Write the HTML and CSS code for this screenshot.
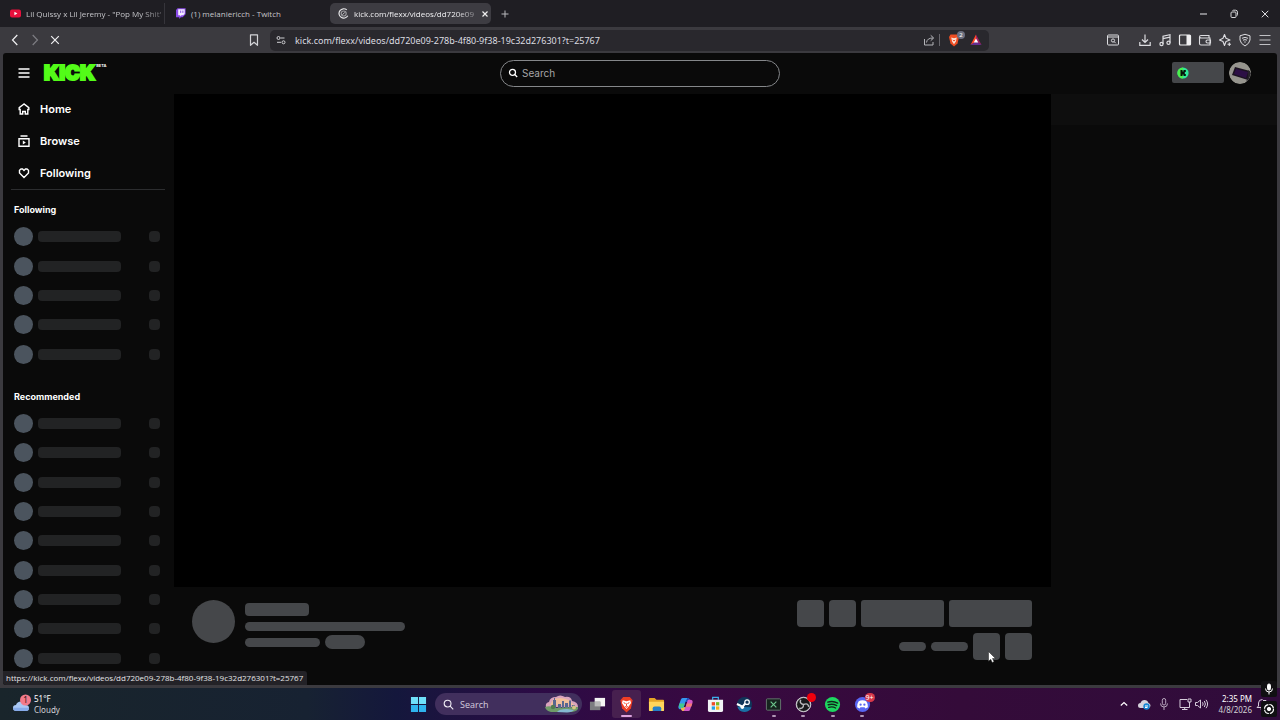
FILE: index.html
```html
<!DOCTYPE html>
<html lang="en">
<head>
    <meta charset="UTF-8">
    <meta name="viewport" content="width=device-width, initial-scale=1.0">
    <title>kick.com/flexx/videos</title>
    <link rel="stylesheet" href="styles.css">
</head>
<body>
    <!-- Tab strip -->
    <div class="tab-strip">
        <div class="tab tab-divided">
            <svg class="tab-icon" viewBox="0 0 11 11"><rect y="1.5" width="11" height="8" rx="2" fill="#e8103c"/><path d="M4.4 3.7v3.6l3-1.8z" fill="#fff"/></svg>
            <a href="#" class="tab-title">Lil Quissy x Lil Jeremy - "Pop My Shit'</a>
        </div>
        <div class="tab">
            <svg class="tab-icon" viewBox="0 0 11 11"><path d="M2.6.3h8v6L7.600 9.300H5.800L4.200 10.900V9.300H1V2z" fill="#8a4be8"/><path d="M3.200 1.200h6.500v4.600L8.200 7.200H6.500L5.200 8.500V7.200h-2z" fill="#f4eeff"/><path d="M5.700 2.600v2.300M7.900 2.600v2.300" stroke="#8a4be8"/></svg>
            <a href="#" class="tab-title">(1) melaniericch - Twitch</a>
        </div>
        <div class="tab tab-active">
            <svg class="tab-icon" viewBox="0 0 11 11" fill="none"><path d="M8.800 1.900A4.700 4.700 0 1 0 9.800 7.800" stroke="#e6e6e8" stroke-width="1.200"/><circle cx="5.700" cy="5.500" r="2.500" stroke="#9a9a9e" stroke-width="1.200"/><path d="M4.500 6.700l2.400-2.400" stroke="#c8c8cc"/></svg>
            <a href="#" class="tab-title">kick.com/flexx/videos/dd720e09</a>
            <button class="icon-btn tab-close" aria-label="Close tab"><svg viewBox="0 0 8 8"><path d="M1.500 1.500l5 5M6.500 1.500l-5 5" stroke="#eee" stroke-width="1.200"/></svg></button>
        </div>
        <button class="icon-btn new-tab" aria-label="New tab"><svg viewBox="0 0 10 10"><path d="M5 1.500v7M1.500 5h7" stroke="#b9b9bd"/></svg></button>
        <div class="window-controls">
            <button class="icon-btn" aria-label="Minimize"><svg viewBox="0 0 14 14"><path d="M4 7h7" stroke="#c9c9cc" stroke-width="1.200"/></svg></button>
            <button class="icon-btn" aria-label="Restore"><svg viewBox="0 0 14 14" fill="none" stroke="#d6d6d9"><rect x="4" y="5" width="5" height="5.500" rx="1"/><path d="M5.500 4q.2-.8 1-.8h2q2 0 2 2v2.500q0 .8-.8 1"/></svg></button>
            <button class="icon-btn" aria-label="Close window"><svg viewBox="0 0 14 14"><path d="M3.800 3.800l6.500 6.500M10.300 3.800l-6.500 6.500" stroke="#e2e2e5"/></svg></button>
        </div>
    </div>

    <!-- Toolbar -->
    <div class="toolbar">
        <div class="toolbar-nav">
            <button class="icon-btn" aria-label="Back"><svg viewBox="0 0 14 14" fill="none"><path d="M9.300 2L4.500 7l4.800 5" stroke="#f0f0f2" stroke-width="1.200"/></svg></button>
            <button class="icon-btn" aria-label="Forward"><svg viewBox="0 0 14 14" fill="none"><path d="M4.700 2l4.800 5-4.800 5" stroke="#7d7d82" stroke-width="1.200"/></svg></button>
            <button class="icon-btn" aria-label="Stop loading"><svg viewBox="0 0 14 14"><path d="M3.200 3.200l7.600 7.600M10.800 3.200l-7.600 7.600" stroke="#f0f0f2" stroke-width="1.200"/></svg></button>
        </div>
        <div class="toolbar-address">
            <button class="icon-btn" aria-label="Bookmark"><svg viewBox="0 0 14 14" fill="none"><path d="M3.500 1.800h7v10.500L7 9.300l-3.500 3z" stroke="#d4d4d8" stroke-width="1.200" stroke-linejoin="round"/></svg></button>
            <div class="address-bar">
                <svg class="address-site" viewBox="0 0 10 10" fill="none" stroke="#d0d0d4"><circle cx="2.500" cy="3" r="1.500"/><path d="M4.500 3h4M1 7.300h4"/><circle cx="7.500" cy="7.300" r="1.500"/></svg>
                <input class="address-input" type="text" aria-label="Address" value="kick.com/flexx/videos/dd720e09-278b-4f80-9f38-19c32d276301?t=25767">
                <button class="icon-btn address-share" aria-label="Share"><svg viewBox="0 0 14 14" fill="none" stroke="#b4b4b9"><path d="M2.500 6v6h8.500V9M4.500 9.500Q5 5 11 5M8.700 2.300L11.700 5 8.700 7.700"/></svg></button>
                <button class="icon-btn address-shield" aria-label="Brave Shields"><svg viewBox="0 0 14 14"><path d="M3.500 1.500h7l1.500 2.500-1.500 6.500L7 13.500 3.500 10.500 2 4z" fill="#ee4d22"/><path d="M4.200 4.500l2.800.8 2.800-.8-.9 4L7 11.200 5.100 8.500z" fill="#fbe3d9"/><path d="M5.800 7l1.200 1 1.200-1" stroke="#ee4d22" fill="none"/></svg><span class="shield-count">2</span></button>
                <button class="icon-btn" aria-label="Rewards"><svg viewBox="0 0 14 14"><path d="M7 1.500L1.500 12 7 8.500z" fill="#ff4724"/><path d="M7 1.500L12.500 12 7 8.500z" fill="#9e1f63"/><path d="M1.500 12h11L7 8.200z" fill="#662d91"/><path d="M7 5.500L4.700 9.600h4.600z" fill="#fff"/></svg></button>
            </div>
        </div>
        <div class="toolbar-actions">
            <button class="icon-btn search-tabs" aria-label="Search tabs"><svg viewBox="0 0 14 14" fill="none" stroke="#dcdce0"><rect x="1.500" y="2" width="11" height="10" rx="1"/><path d="M2 4h10"/><circle cx="7" cy="7.500" r="1.600"/><path d="M8.200 8.700l1.500 1.500"/></svg></button>
            <button class="icon-btn" aria-label="Downloads"><svg viewBox="0 0 14 14" fill="none" stroke="#dcdce0" stroke-width="1.200"><path d="M7 1.500v8M4 6.500l3 3 3-3M1.800 9v3.300h10.400V9"/></svg></button>
            <button class="icon-btn" aria-label="Media"><svg viewBox="0 0 14 14" fill="none" stroke="#dcdce0" stroke-width="1.200"><path d="M5 11V3.200l7-1.500v8M5 5.600l7-1.500"/><circle cx="3.500" cy="11" r="1.600"/><circle cx="10.500" cy="9.700" r="1.600"/></svg></button>
            <button class="icon-btn" aria-label="Sidebar"><svg viewBox="0 0 14 14"><rect x="1.500" y="2" width="11" height="10" rx="1" fill="none" stroke="#f0f0f2" stroke-width="1.200"/><path d="M8.500 2h4v10h-4z" fill="#f0f0f2"/></svg></button>
            <button class="icon-btn" aria-label="Wallet"><svg viewBox="0 0 14 14" fill="none" stroke="#dcdce0" stroke-width="1.100"><path d="M11 5V2.500H3Q1.500 2.500 1.500 4v6.500q0 1.500 1.500 1.500h9V5H3.500Q1.500 5 1.500 3.800M12.500 7H9.500q-1.500 0-1.500 1.500T9.500 10h3z"/></svg></button>
            <button class="icon-btn" aria-label="Leo AI"><svg viewBox="0 0 14 14" fill="none" stroke="#dcdce0" stroke-width="1.100"><path d="M6.500 1.500L8 5.300 12 7 8 8.500 6.500 12.500 5 8.500 1.500 7 5 5.300z" stroke-linejoin="round"/><path d="M11.300 9.500v3.500M9.500 11.300h3.500"/></svg></button>
            <button class="icon-btn" aria-label="VPN"><svg viewBox="0 0 14 14" fill="none" stroke="#dcdce0"><path d="M7 1.300l5 1.500V7q-.5 3.500-5 6-4.500-2.500-5-6V2.800z"/><path d="M4 5.300q3-1.800 6 0M5 7.200q2-1.200 4 0M6.300 9h1.400"/></svg></button>
            <button class="icon-btn" aria-label="Menu"><svg viewBox="0 0 14 14"><path d="M1.500 2.500h11M1.500 7h11M1.500 11.500h11" stroke="#c0c0c4" stroke-width="1.200"/></svg></button>
        </div>
    </div>

    <!-- Page -->
    <div class="page">
        <header class="site-header">
            <div class="header-left">
                <button class="icon-btn" aria-label="Toggle sidebar"><svg viewBox="0 0 14 14"><path d="M1.500 3h11M1.500 7h11M1.500 11h11" stroke="#fff" stroke-width="1.500"/></svg></button>
                <a href="#" class="logo">KICK<sup class="logo-beta">BETA</sup></a>
            </div>
            <label class="search">
                <svg class="search-icon" viewBox="0 0 10 10" fill="none" stroke="#fff" stroke-width="1.300"><circle cx="4.500" cy="4.300" r="3"/><path d="M6.700 6.500l2.500 2.500"/></svg>
                <input class="search-input" type="search" placeholder="Search" aria-label="Search">
            </label>
            <div class="header-right">
                <button class="balance" aria-label="Kicks balance"><svg viewBox="0 0 12 12"><circle cx="6" cy="6" r="5.600" fill="#2fe89a"/><path d="M6 .4a5.600 5.600 0 0 0 0 11.200z" fill="#4cf04a"/><path d="M3.500 3h2v1.500h1V3h2.300v2h-1v2h1v2H6.500V7.500h-1V9h-2z" fill="#06120a"/></svg></button>
                <button class="avatar" aria-label="Account"><svg viewBox="0 0 22 22"><circle cx="11" cy="11" r="11" fill="#96958e"/><path d="M6 5l15 4-2 9L3 13z" fill="#1b1320"/><path d="M7 7l12 3-2 6L5 12z" fill="#2c0f45"/><path d="M19 8l3 3-2 6-3 3 2-5z" fill="#26222a"/></svg></button>
            </div>
        </header>

        <div class="page-body">
            <aside class="sidebar">
                <nav class="side-nav">
                    <a href="#"><svg viewBox="0 0 14 14" fill="none" stroke="#fff" stroke-width="1.400"><path d="M7 2L2.200 5.700v1.800h1V12h2.500V9.500h2.600V12h2.500V7.500h1V5.700z"/></svg>Home</a>
                    <a href="#"><svg viewBox="0 0 14 14" fill="none" stroke="#fff" stroke-width="1.400"><path d="M3.500 2h7M2 4.800h10v7.400H2z"/><path d="M5.800 6.500v4l3-2z" fill="#fff" stroke="none"/></svg>Browse</a>
                    <a href="#"><svg viewBox="0 0 14 14" fill="none" stroke="#fff" stroke-width="1.400"><path d="M7 11.500L2.500 7V4.300L4 3h1.600L7 4.400 8.400 3H10l1.500 1.300V7z"/></svg>Following</a>
                </nav>
                <section class="channels">
                    <h2>Following</h2>
                    <ul class="channel-list channel-list-short">
                        <li><i></i><b></b><s></s></li>
                        <li><i></i><b></b><s></s></li>
                        <li><i></i><b></b><s></s></li>
                        <li><i></i><b></b><s></s></li>
                        <li><i></i><b></b><s></s></li>
                    </ul>
                </section>
                <section class="channels channels-recommended">
                    <h2>Recommended</h2>
                    <ul class="channel-list channel-list-long">
                        <li><i></i><b></b><s></s></li>
                        <li><i></i><b></b><s></s></li>
                        <li><i></i><b></b><s></s></li>
                        <li><i></i><b></b><s></s></li>
                        <li><i></i><b></b><s></s></li>
                        <li><i></i><b></b><s></s></li>
                        <li><i></i><b></b><s></s></li>
                        <li><i></i><b></b><s></s></li>
                        <li><i></i><b></b><s></s></li>
                    </ul>
                </section>
            </aside>

            <main class="stage">
                <div class="video"></div>
                <div class="video-info">
                    <div class="bone bone-avatar"></div>
                    <div class="info-lines">
                        <div class="bone bone-name"></div>
                        <div class="bone bone-title"></div>
                        <div class="info-tags">
                            <div class="bone bone-category"></div>
                            <div class="bone bone-tag"></div>
                        </div>
                    </div>
                    <div class="info-actions">
                        <div class="action-row">
                            <div class="bone bone-square"></div>
                            <div class="bone bone-square"></div>
                            <div class="bone bone-button"></div>
                            <div class="bone bone-button"></div>
                        </div>
                        <div class="action-row">
                            <div class="action-stats">
                                <div class="bone bone-viewers"></div>
                                <div class="bone bone-time"></div>
                            </div>
                            <div class="bone bone-square bone-hovered">
                                <svg class="pointer" viewBox="0 0 8 12"><path d="M.5.5v9.800l2.200-2 1.500 3.200 1.800-.8-1.500-3.200h3z" fill="#fff" stroke="#222" stroke-width=".5"/></svg>
                            </div>
                            <div class="bone bone-square"></div>
                        </div>
                    </div>
                </div>
            </main>

            <aside class="chat">
                <div class="chat-header"></div>
            </aside>
        </div>
        <div class="link-status">https://kick.com/flexx/videos/dd720e09-278b-4f80-9f38-19c32d276301?t=25767</div>
    </div>

    <!-- Taskbar -->
    <footer class="taskbar">
        <button class="weather">
            <svg viewBox="0 0 20 20"><path d="M4.500 17Q1 17 1 13.800 1 11 4 11 5 7.500 9 7.500q3.500 0 4.500 3.500 3.500 0 3.500 3T14 17z" fill="#a9c8f5"/><path d="M4.500 17Q1 17 1 13.800h16Q17 17 14 17z" fill="#86abea"/><circle cx="13.500" cy="6" r="5.500" fill="#f27a8a"/><text x="13.500" y="9" text-anchor="middle" font-family="Noto Sans, sans-serif" font-size="8" fill="#2a1015">1</text></svg>
            <span class="weather-text">51°F<span>Cloudy</span></span>
        </button>
        <div class="task-center">
            <button class="task-app" aria-label="Start"><svg viewBox="0 0 18 18"><path d="M1 1h7.500v7.500H1zM9.500 1H17v7.500H9.500z" fill="#6fe0fa"/><path d="M1 9.500h7.500V17H1zM9.500 9.500H17V17H9.500z" fill="#2fb4ee"/></svg></button>
            <label class="task-search">
                <svg class="task-search-icon" viewBox="0 0 12 12" fill="none" stroke="#f0ecf4" stroke-width="1.200"><circle cx="5" cy="5" r="3.700"/><path d="M7.800 7.800l3.400 3.400"/></svg>
                <input type="search" placeholder="Search" aria-label="Search Windows">
                <svg class="task-search-art" viewBox="0 0 34 18"><path d="M1 12Q0 8 4 7q1-5 7-5 4-3 9 0 6-1 7 4 6 1 6 6z" fill="#d9a4bd"/><path d="M8 5q6-4 16 0l5 5H5z" fill="#f1bf9b"/><path d="M8 14V5h1V3h1v2h1v9zM13 14V9h3v5zM17 14V6h2v8zM20 14V8h3v6zM24 14V6l1-1 1 1v8zM27 14v-4h3v4z" fill="#596790"/><path d="M0 12q5-2 10 1l23-1q1 4-6 5H6q-5-1-6-5z" fill="#6f9c68"/><path d="M12 17q2-3 10-3l7 1q-2 2-7 2.500z" fill="#85b9d2"/><circle cx="8" cy="12" r="2.200" fill="#527c50"/><circle cx="29" cy="12.500" r="2" fill="#d6c383"/></svg>
            </label>
            <div class="task-apps">
                <button class="task-app" aria-label="Task view"><svg viewBox="0 0 18 18"><path d="M6 2h11v9H6z" fill="#f4f4f4"/><path d="M1 6h11v9H1z" fill="#7c7d80"/><path d="M6 6h6v5H6z" fill="#b9bab9"/></svg></button>
                <button class="task-app task-app-current" aria-label="Brave"><svg viewBox="0 0 18 18"><path d="M5.500 1h7l3 3.500-1.800 8.500L9 17.500 4.300 13 2.500 4.500z" fill="#ef3f25"/><path d="M5 4.500l4 1 4-1 .8 3-2.500 3.500L9 13.800 6.700 11 4.200 7.500z" fill="#fff"/><path d="M6 7l2 1M12 7l-2 1M9 8v3M7.500 11L9 12l1.500-1" stroke="#ef3f25" fill="none"/></svg></button>
                <button class="task-app" aria-label="File Explorer"><svg viewBox="0 0 18 18"><path d="M1 3q0-1 1-1h5l2 2h7q1 0 1 1v3H1z" fill="#e5a526"/><path d="M1 6h16v9q0 1-1 1H2q-1 0-1-1z" fill="#ffd55b"/><path d="M5 16v-3q0-2 2-2h5q2 0 2 2v3z" fill="#2580c8"/></svg></button>
                <button class="task-app" aria-label="Copilot"><svg viewBox="0 0 18 18"><path d="M6 2h5q2 0 2.500 2L14 6H9L6.500 14H4q-3 0-2.500-3L4 4q.5-2 2-2z" fill="#3598ef"/><path d="M9 6l2-4q2 0 2.500 2L14 6z" fill="#1846b8"/><path d="M12 16H7q-2 0-2.500-2L4 12h5l2.500-8H14q3 0 2.500 3L14 14q-.5 2-2 2z" fill="#d258c8"/><path d="M4 12h5l-2 4q-2 0-2.500-2z" fill="#f5b847"/><path d="M10.500 8h5.800L15 11.500H9.200z" fill="#f57c75"/><path d="M2.500 8h5.700L6.500 13 2 12z" fill="#45c88a"/></svg></button>
                <button class="task-app" aria-label="Microsoft Store"><svg viewBox="0 0 18 18"><path d="M6 4V1.500h6V4" fill="none" stroke="#3ab0ed" stroke-width="1.300"/><path d="M1 4h16v11q0 2-2 2H3q-2 0-2-2z" fill="#f1f3f6"/><path d="M5 6.500h3.500V10H5z" fill="#ed4c2c"/><path d="M9.500 6.500H13V10H9.500z" fill="#78b927"/><path d="M5 11h3.500v3.500H5z" fill="#22a0e8"/><path d="M9.500 11H13v3.500H9.500z" fill="#f5b51d"/></svg></button>
                <button class="task-app" aria-label="Steam"><svg viewBox="0 0 18 18"><circle cx="9" cy="9" r="8" fill="#103558"/><path d="M1.500 11.500Q3 17 9 17q6-.5 7.500-5z" fill="#1c70a5"/><path d="M1 8.500l6 2.800L10.500 7" stroke="#fff" stroke-width="2.200" fill="none"/><circle cx="11.700" cy="6.500" r="2.400" fill="#103558" stroke="#fff" stroke-width="1.300"/><circle cx="6.700" cy="12" r="1.800" fill="#fff"/></svg></button>
                <button class="task-app task-app-open" aria-label="Xbox overlay"><svg viewBox="0 0 18 18"><rect x="1.500" y="3" width="15" height="12" rx="1" fill="#16251f" stroke="#65766e"/><path d="M6 6l6 6M12 6l-6 6" stroke="#6dc98d" stroke-width="1.200"/></svg></button>
                <button class="task-app task-app-open" aria-label="OBS Studio"><svg viewBox="0 0 18 18"><circle cx="9" cy="9" r="7.700" fill="#a9a9ad" stroke="#d0d0d3"/><circle cx="9" cy="9" r="6.800" fill="#19191b"/><path d="M9 9Q4.500 8 6 4M9 9q5-2 5.500 2.500M9 9q0 5-4.500 4" fill="none" stroke="#b8b8bb" stroke-width="1.500"/></svg><span class="app-badge badge-dot"></span></button>
                <button class="task-app task-app-open" aria-label="Spotify"><svg viewBox="0 0 18 18"><circle cx="9" cy="9" r="8" fill="#1ed760"/><path d="M4 6.500q5.500-1.800 10.500 1M4.500 9.300q4.500-1.500 9 .8M5 12q4-1.200 7.300.7" fill="none" stroke="#10271a" stroke-width="1.500" stroke-linecap="round"/></svg></button>
                <button class="task-app task-app-open" aria-label="Discord"><svg viewBox="0 0 18 18"><circle cx="9" cy="9" r="8" fill="#5865f2"/><path d="M5 5.500q4-1.800 8 0 2 3 1.700 6.300L12 13.200l-.8-1.200H6.800L6 13.200l-2.700-1.400Q3 8.500 5 5.500z" fill="#fff"/><circle cx="7" cy="9.200" r="1.200" fill="#5865f2"/><circle cx="11" cy="9.200" r="1.200" fill="#5865f2"/></svg><span class="app-badge">9+</span></button>
            </div>
        </div>
        <div class="tray">
            <button class="icon-btn" aria-label="Hidden icons"><svg viewBox="0 0 14 14" fill="none"><path d="M3.800 8.500L7 5.500l3.200 3" stroke="#fff" stroke-width="1.200"/></svg></button>
            <button class="icon-btn" aria-label="OneDrive"><svg viewBox="0 0 14 14"><path d="M3.500 11Q1 11 1 8.500T3.500 6Q4.500 3 7.500 3t4 3q2 .5 2 2.500T11.500 11z" fill="#d6d2dc"/><circle cx="9.500" cy="9.500" r="3.200" fill="#1685d2"/><path d="M8 9h3M8 10.500h2.500" stroke="#fff"/></svg></button>
            <button class="icon-btn" aria-label="Microphone"><svg viewBox="0 0 14 14" fill="none" stroke="#b7a6bd"><rect x="5.300" y="1.500" width="3.400" height="6.500" rx="1.700"/><path d="M3.500 6.500Q3.500 10 7 10t3.500-3.500M7 10v3"/></svg></button>
            <button class="icon-btn tray-network" aria-label="Network and volume"><svg viewBox="0 0 14 14" fill="none" stroke="#d6cddb"><path d="M9 2.500H2v8h9.500V7.500M4 12.500h5.500M6.700 10.500v2"/><path d="M10 2h3v3h-3zM11.500 5v3"/></svg><svg viewBox="0 0 14 14" fill="none" stroke="#d6cddb"><path d="M1.500 5.500h2L6.500 3v8l-3-2.500h-2zM8.500 5.300q1.300 1.700 0 3.400M10.300 4q2.300 3 0 6M12 2.800q3.200 4.200 0 8.400"/></svg></button>
            <button class="clock">2:35 PM<span>4/8/2026</span></button>
            <button class="icon-btn" aria-label="Notifications"><svg viewBox="0 0 14 14" fill="none" stroke="#d6cddb"><path d="M7.500 2.500Q3.500 2.500 3.500 6v3L2 10.500h9M5.500 12h3M8 3.500h3L8.500 6.500h3"/></svg></button>
        </div>
    </footer>

    <div class="capture-overlay">
        <span><svg viewBox="0 0 16 16" fill="none" stroke="#fff"><rect x="6.500" y="3" width="3" height="6" rx="1.500" fill="#fff"/><path d="M4.500 7.500Q4.500 11 8 11t3.500-3.500M8 11v2.500"/></svg></span>
        <span><svg viewBox="0 0 16 16" fill="none" stroke="#fff"><circle cx="8" cy="8" r="4.500" stroke-width="1.200" stroke-dasharray="6 1"/><circle cx="8" cy="8" r="1.700" fill="#fff"/></svg></span>
    </div>
</body>
</html>
```
FILE: styles.css
```css
:root {
    --chrome-dark: #1f1e23;
    --chrome: #3b3a3f;
    --page: #0a0a0a;
    --bone: #45474a;
    --kick: #53fc18;
    --ui-font: "Noto Sans", "Open Sans", sans-serif;
    --small-font: "Open Sans", "Noto Sans", sans-serif;
    --site-font: Inter, "Liberation Sans", sans-serif;
}
* {
    box-sizing: border-box;
}
body {
    margin: 0;
    height: 100vh;
    display: flex;
    flex-direction: column;
    overflow: hidden;
    background: var(--chrome);
    color: #fff;
    font-family: var(--ui-font);
    font-size: 9px;
}
button, input {
    font: inherit;
    color: inherit;
    background: none;
    border: 0;
    padding: 0;
    margin: 0;
}
input {
    outline: none;
    min-width: 0;
    appearance: none;
}
a {
    color: inherit;
    text-decoration: none;
}
svg {
    display: block;
    flex: none;
}
.icon-btn {
    position: relative;
    flex: none;
    display: flex;
    align-items: center;
    justify-content: center;
    width: 20px;
    height: 20px;
}
.icon-btn svg {
    width: 14px;
    height: 14px;
}

/* Tab strip */
.tab-strip {
    display: flex;
    align-items: center;
    height: 27px;
    background: var(--chrome-dark);
}
.tab {
    display: flex;
    align-items: center;
    gap: 5px;
    width: 165px;
    height: 21px;
    padding: 0 0 0 10px;
    color: #c4c4c8;
    font-family: var(--small-font);
    font-size: 8px;
}
.tab-divided {
    border-right: 1px solid #36353b;
}
.tab-active {
    width: 161px;
    padding: 0 5px 0 8px;
    border-radius: 5px;
    background: #3d3c42;
    color: #f0f0f2;
}
.tab-icon {
    width: 11px;
    height: 11px;
}
.tab-title {
    white-space: nowrap;
    mask-image: linear-gradient(to right, #000 85%, rgba(0, 0, 0, 0.4));
}
.tab:not(.tab-divided):not(.tab-active) .tab-title {
    mask-image: none;
}
.tab-close {
    width: 12px;
    margin-left: auto;
}
.tab-close svg {
    width: 8px;
    height: 8px;
}
.new-tab {
    margin-left: 4px;
}
.new-tab svg {
    width: 10px;
    height: 10px;
}
.window-controls {
    display: flex;
    gap: 11px;
    margin-left: auto;
    padding-right: 5px;
}

/* Toolbar */
.toolbar {
    display: grid;
    grid-template-columns: 244fr 745fr 291fr;
    align-items: center;
    height: 26px;
}
.toolbar-nav {
    display: flex;
    padding-left: 5px;
}
.toolbar-address {
    display: flex;
    align-items: center;
    gap: 6px;
}
.address-bar {
    flex: 1;
    display: flex;
    align-items: center;
    height: 21px;
    padding: 0 3px 0 6px;
    border-radius: 5px;
    background: #29282d;
}
.address-site {
    width: 10px;
    height: 10px;
    margin-right: 9px;
}
.address-input {
    flex: 1;
    font-size: 9px;
    color: #dcdce0;
}
.address-share {
    width: 22px;
    height: 12px;
    border-right: 1px solid #68676d;
}
.address-shield {
    width: 24px;
    margin-left: 2px;
}
.shield-count {
    position: absolute;
    top: 1px;
    right: 1px;
    width: 8px;
    height: 8px;
    border-radius: 4px;
    background: #6b6f80;
    font-size: 6px;
    line-height: 8px;
}
.toolbar-actions {
    display: flex;
    justify-content: flex-end;
    padding-right: 5px;
}
.search-tabs {
    margin-right: 12px;
}

/* Page */
.page {
    position: relative;
    flex: 1;
    min-height: 0;
    display: flex;
    flex-direction: column;
    margin: 0 3px 3px;
    border-radius: 3px;
    overflow: hidden;
    background: var(--page);
    font-family: var(--site-font);
}
.site-header {
    flex: none;
    display: grid;
    grid-template-columns: 1fr 280px 1fr;
    align-items: center;
    height: 40px;
}
.header-left {
    display: flex;
    align-items: center;
    gap: 10px;
    padding-left: 11px;
}
.logo {
    display: flex;
    color: var(--kick);
    font-size: 20px;
    font-weight: 900;
    line-height: 20px;
    -webkit-text-stroke: 2px var(--kick);
}
.logo-beta {
    margin-left: 1px;
    color: #fff;
    font-size: 4px;
    font-weight: 700;
    line-height: 6px;
    -webkit-text-stroke: 0;
}
.search {
    display: flex;
    align-items: center;
    gap: 4px;
    height: 27px;
    padding: 0 7px;
    border: 1px solid #85878a;
    border-radius: 14px;
}
.search-icon {
    width: 10px;
    height: 10px;
}
.search-input {
    flex: 1;
    font-size: 10px;
}
.search-input::placeholder {
    color: #a5a5a7;
}
.header-right {
    display: flex;
    justify-content: flex-end;
    gap: 5px;
    padding-right: 26px;
}
.balance {
    width: 52px;
    height: 21px;
    padding-left: 5px;
    border-radius: 2px;
    background: var(--bone);
}
.balance svg {
    width: 12px;
    height: 12px;
}
.avatar {
    width: 22px;
    height: 22px;
    border-radius: 50%;
    overflow: hidden;
}
.page-body {
    flex: 1;
    min-height: 0;
    display: flex;
}

/* Sidebar */
.sidebar {
    flex: none;
    width: 171px;
    padding: 0 9px 0 8px;
    overflow: hidden;
}
.side-nav {
    border-bottom: 1px solid #2c2d2f;
}
.side-nav a {
    display: flex;
    align-items: center;
    gap: 9px;
    height: 32px;
    padding-left: 6px;
    font-size: 11px;
    font-weight: 600;
}
.side-nav svg {
    width: 14px;
    height: 14px;
}
.channels {
    padding: 8px 5px 0 3px;
}
.channels-recommended {
    padding-top: 16px;
}
.channels h2 {
    margin: 0;
    font-size: 9px;
    font-weight: 700;
    line-height: 24px;
}
.channel-list {
    display: grid;
    grid-auto-rows: 1fr;
    margin: 0;
    padding: 0;
    list-style: none;
}
.channel-list-short {
    height: 147px;
}
.channel-list-long {
    height: 264px;
}
.channel-list li {
    display: flex;
    align-items: center;
}
.channel-list i {
    width: 19px;
    height: 19px;
    margin-right: 5px;
    border-radius: 50%;
    background: #4b545e;
}
.channel-list b {
    width: 83px;
    height: 11px;
    border-radius: 4px;
    background: #222324;
}
.channel-list s {
    width: 11px;
    height: 11px;
    margin-left: auto;
    border-radius: 4px;
    background: #222324;
}

/* Video and its loading skeleton */
.stage {
    flex: 1;
    min-width: 0;
    padding-top: 1px;
}
.video {
    aspect-ratio: 16 / 9;
    background: #000;
}
.video-info {
    display: flex;
    gap: 10px;
    padding: 13px 19px 0 18px;
}
.bone {
    flex: none;
    border-radius: 5px;
    background: var(--bone);
}
.bone-avatar {
    width: 43px;
    height: 43px;
    border-radius: 50%;
}
.info-lines {
    flex: 1;
    padding-top: 3px;
}
.bone-name {
    width: 64px;
    height: 13px;
    margin-bottom: 6px;
    border-radius: 4px;
}
.bone-title {
    width: 160px;
    height: 9px;
    margin-bottom: 4px;
}
.info-tags {
    display: flex;
    align-items: center;
    gap: 5px;
}
.bone-category {
    width: 75px;
    height: 9px;
}
.bone-tag {
    width: 40px;
    height: 14px;
    border-radius: 7px;
}
.info-actions {
    display: flex;
    flex-direction: column;
    align-items: flex-end;
    gap: 6px;
}
.action-row, .action-stats {
    display: flex;
    align-items: center;
    gap: 5px;
}
.bone-square {
    width: 27px;
    height: 27px;
    border-radius: 4px;
}
.bone-button {
    width: 83px;
    height: 27px;
    border-radius: 3px;
}
.bone-viewers {
    width: 27px;
    height: 9px;
}
.bone-time {
    width: 37px;
    height: 9px;
}
.bone-hovered {
    position: relative;
}
.pointer {
    position: absolute;
    top: 18px;
    left: 15px;
    width: 8px;
    height: 12px;
}
.chat {
    flex: none;
    width: 226px;
    padding-top: 1px;
}
.chat-header {
    height: 31px;
    background: #0e0e0e;
}
.link-status {
    position: absolute;
    left: 0;
    bottom: 0;
    height: 14px;
    padding: 0 4px 0 3px;
    border-radius: 0 3px 0 0;
    background: #232227;
    color: #e4e4e6;
    font-family: var(--small-font);
    font-size: 8px;
    line-height: 14px;
}

/* Taskbar */
.taskbar {
    flex: none;
    display: grid;
    grid-template-columns: 1fr auto 1fr;
    align-items: center;
    height: 32px;
    background: linear-gradient(to right, #19252b, #172232 24%, #14173c 31%, #2c0b45 42%, #380941 55%, #340b39 75%, #300c3b);
}
.weather {
    display: flex;
    align-items: center;
    gap: 2px;
    padding-left: 12px;
}
.weather svg {
    width: 20px;
    height: 20px;
}
.weather-text, .clock {
    font-size: 8px;
    line-height: 11px;
    text-align: left;
}
.weather-text span, .clock span {
    display: block;
    color: #d2d2d6;
}
.task-center {
    display: flex;
    align-items: center;
    padding-left: 1px;
}
.task-app {
    position: relative;
    display: flex;
    align-items: center;
    justify-content: center;
    width: 29px;
    height: 28px;
}
.task-app svg {
    width: 17px;
    height: 17px;
}
.task-search {
    display: flex;
    align-items: center;
    width: 147px;
    height: 22px;
    margin: 0 1px 0 2px;
    padding: 0 3px 0 8px;
    border-radius: 11px;
    background: #412f5d;
}
.task-search-icon {
    width: 11px;
    height: 11px;
    margin-right: 6px;
}
.task-search input {
    flex: 1;
    font-family: var(--small-font);
    font-size: 9px;
}
.task-search input::placeholder {
    color: #d5cddf;
}
.task-search-art {
    width: 34px;
    height: 18px;
}
.task-apps {
    display: grid;
    grid-template-columns: repeat(10, 1fr);
    width: 294px;
}
.task-app-current {
    border-radius: 3px;
    background: #47204f;
}
.task-app-current::after, .task-app-open::after {
    content: "";
    position: absolute;
    bottom: 1px;
    width: 4px;
    height: 2px;
    border-radius: 1px;
    background: #b096b6;
}
.task-app-current::after {
    width: 11px;
    background: #dda4df;
}
.app-badge {
    position: absolute;
    top: 3px;
    right: 2px;
    width: 10px;
    height: 9px;
    border-radius: 5px;
    background: #d6384a;
    font-size: 7px;
    line-height: 9px;
}
.badge-dot {
    width: 9px;
    background: #f0000c;
}
.tray {
    display: flex;
    align-items: center;
    justify-content: flex-end;
    padding-right: 8px;
}
.tray-network {
    width: 38px;
    gap: 2px;
}
.clock {
    width: 40px;
    text-align: right;
}
.capture-overlay {
    position: absolute;
    right: 3px;
    bottom: 3px;
    display: grid;
    gap: 4px;
}
.capture-overlay span {
    width: 16px;
    height: 16px;
    border-radius: 2px;
    background: #101012;
}
```
